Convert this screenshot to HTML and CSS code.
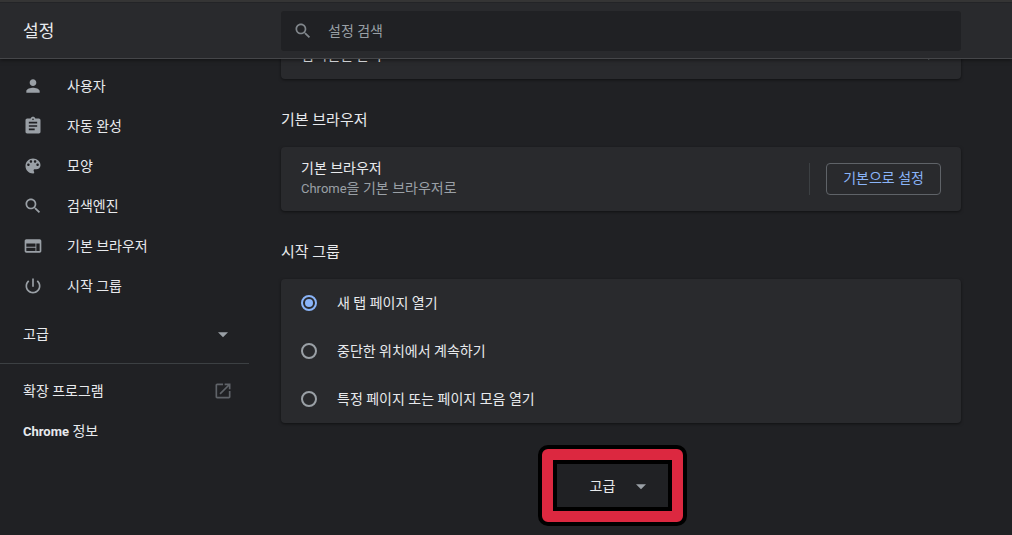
FILE: index.html
```html
<!DOCTYPE html>
<html lang="ko">
<head>
    <meta charset="UTF-8">
    <meta name="viewport" content="width=device-width, initial-scale=1.0">
    <title>설정</title>
    <link rel="stylesheet" href="styles.css">
</head>
<body>

<header class="toolbar">
    <h1>설정</h1>
    <div class="search">
        <svg class="icon" viewBox="0 0 24 24"><path d="M15.5 14h-.79l-.28-.27C15.41 12.59 16 11.11 16 9.5 16 5.91 13.09 3 9.5 3S3 5.91 3 9.5 5.91 16 9.5 16c1.61 0 3.09-.59 4.23-1.57l.27.28v.79l5 4.99L20.49 19l-4.99-5zm-6 0C7.01 14 5 11.99 5 9.5S7.01 5 9.5 5 14 7.01 14 9.5 11.99 14 9.5 14z"/></svg>
        <input type="text" id="search" placeholder="설정 검색" aria-label="설정 검색">
    </div>
</header>

<div class="container">
    <nav class="sidebar">
        <a href="#people">
            <svg class="icon" viewBox="0 0 24 24"><path d="M12 12c2.21 0 4-1.79 4-4s-1.79-4-4-4-4 1.79-4 4 1.79 4 4 4zm0 2c-2.67 0-8 1.34-8 4v2h16v-2c0-2.66-5.33-4-8-4z"/></svg>
            사용자
        </a>
        <a href="#autofill">
            <svg class="icon" viewBox="0 0 24 24"><path d="M19 3h-4.18C14.4 1.84 13.3 1 12 1c-1.3 0-2.4.84-2.82 2H5c-1.1 0-2 .9-2 2v14c0 1.1.9 2 2 2h14c1.1 0 2-.9 2-2V5c0-1.1-.9-2-2-2zm-7 0c.55 0 1 .45 1 1s-.45 1-1 1-1-.45-1-1 .45-1 1-1zm2 14H7v-2h7v2zm3-4H7v-2h10v2zm0-4H7V7h10v2z"/></svg>
            자동 완성
        </a>
        <a href="#appearance">
            <svg class="icon" viewBox="0 0 24 24"><path d="M12 3c-4.97 0-9 4.03-9 9s4.03 9 9 9c.83 0 1.5-.67 1.5-1.5 0-.39-.15-.74-.39-1.01-.23-.26-.38-.61-.38-.99 0-.83.67-1.5 1.5-1.5H16c2.76 0 5-2.24 5-5 0-4.42-4.03-8-9-8zm-5.5 9c-.83 0-1.5-.67-1.5-1.5S5.67 9 6.5 9 8 9.67 8 10.5 7.33 12 6.5 12zm3-4C8.67 8 8 7.33 8 6.5S8.67 5 9.5 5s1.5.67 1.5 1.5S10.33 8 9.5 8zm5 0c-.83 0-1.5-.67-1.5-1.5S13.67 5 14.5 5s1.5.67 1.5 1.5S15.33 8 14.5 8zm3 4c-.83 0-1.5-.67-1.5-1.5S16.67 9 17.5 9s1.5.67 1.5 1.5-.67 1.5-1.5 1.5z"/></svg>
            모양
        </a>
        <a href="#searchEngine">
            <svg class="icon" viewBox="0 0 24 24"><path d="M15.5 14h-.79l-.28-.27C15.41 12.59 16 11.11 16 9.5 16 5.91 13.09 3 9.5 3S3 5.91 3 9.5 5.91 16 9.5 16c1.61 0 3.09-.59 4.23-1.57l.27.28v.79l5 4.99L20.49 19l-4.99-5zm-6 0C7.01 14 5 11.99 5 9.5S7.01 5 9.5 5 14 7.01 14 9.5 11.99 14 9.5 14z"/></svg>
            검색엔진
        </a>
        <a href="#defaultBrowser">
            <svg class="icon" viewBox="0 0 24 24"><path d="M20 4H4c-1.1 0-1.99.9-1.99 2L2 18c0 1.1.9 2 2 2h16c1.1 0 2-.9 2-2V6c0-1.1-.9-2-2-2zm-5 14H4v-4h11v4zm0-5H4V9h11v4zm5 5h-4V9h4v9z"/></svg>
            기본 브라우저
        </a>
        <a href="#onStartup">
            <svg class="icon" viewBox="0 0 24 24"><path d="M13 3h-2v10h2V3zm4.83 2.17l-1.42 1.42C17.99 7.86 19 9.81 19 12c0 3.87-3.13 7-7 7s-7-3.13-7-7c0-2.19 1.01-4.14 2.58-5.42L6.17 5.17C4.23 6.82 3 9.26 3 12c0 4.97 4.03 9 9 9s9-4.03 9-9c0-2.74-1.23-5.18-3.17-6.83z"/></svg>
            시작 그룹
        </a>
        <button class="menu-advanced">
            고급
            <svg class="icon" viewBox="0 0 24 24"><path d="M6 10l6 6 6-6z"/></svg>
        </button>
        <hr>
        <a class="plain" href="#extensions">
            확장 프로그램
            <svg class="icon external" viewBox="0 0 24 24"><path d="M19 19H5V5h7V3H5c-1.11 0-2 .9-2 2v14c0 1.1.89 2 2 2h14c1.1 0 2-.9 2-2v-7h-2v7zM14 3v2h3.59l-9.83 9.83 1.41 1.41L19 6.41V10h2V3h-7z"/></svg>
        </a>
        <a class="plain" href="#about"><span><span class="latin">Chrome</span> 정보</span></a>
    </nav>

    <main class="content">
        <!-- last row of the search engine section, scrolled under the toolbar -->
        <section class="card scrolled">
            <a class="row link-row" href="#searchEngines">
                검색엔진 관리
                <svg class="icon" viewBox="0 0 24 24"><path d="M9 6l6 6-6 6z"/></svg>
            </a>
        </section>

        <h2 id="defaultBrowser">기본 브라우저</h2>
        <section class="card browser">
            <div class="browser-text">
                <div>기본 브라우저</div>
                <div class="secondary"><span class="latin">Chrome</span>을 기본 브라우저로</div>
            </div>
            <div class="browser-action">
                <button class="action-button">기본으로 설정</button>
            </div>
        </section>

        <h2 id="onStartup">시작 그룹</h2>
        <section class="card">
            <label class="row"><input type="radio" name="startup" checked>새 탭 페이지 열기</label>
            <label class="row"><input type="radio" name="startup">중단한 위치에서 계속하기</label>
            <label class="row"><input type="radio" name="startup">특정 페이지 또는 페이지 모음 열기</label>
        </section>

        <div class="advanced">
            <div class="highlight">
                <button>
                    고급
                    <svg class="icon" viewBox="0 0 24 24"><path d="M6 10l6 6 6-6z"/></svg>
                </button>
            </div>
        </div>
    </main>
</div>

</body>
</html>
```
FILE: styles.css
```css
* {
    box-sizing: border-box;
}

body {
    margin: 0;
    background-color: #202124;
    color: #e8eaed;
    font-family: Roboto, "Noto Sans CJK KR", sans-serif;
    font-size: 14px;
    line-height: 20px;
}

a {
    color: inherit;
    text-decoration: none;
}

button, input {
    font: inherit;
    color: inherit;
}

button {
    background: none;
    border: none;
    cursor: pointer;
}

.icon {
    flex: none;
    width: 20px;
    height: 20px;
    fill: #9aa0a6;
}

/* Latin letters look larger than the Korean ones at the same size */
.latin {
    font-size: 13px;
}

/* Toolbar and page share the same columns */
.toolbar, .container {
    display: grid;
    grid-template-columns: 281px minmax(0, 680px);
    padding-right: 16px;
}

.toolbar {
    position: sticky;
    top: 0;
    z-index: 1;
    align-items: center;
    height: 59px;
    padding-top: 2px;
    background-color: #292a2d;
    border-top: 2px solid #353535;
    border-bottom: 1px solid #454649;
    box-shadow: 0 1px 4px rgba(0, 0, 0, 0.5), inset 0 1px #232427;
}

.toolbar h1 {
    margin: 0;
    padding-left: 23px;
    font-size: 17px;
    font-weight: 400;
}

.search {
    display: flex;
    align-items: center;
    gap: 15px;
    height: 40px;
    padding: 0 12px;
    background-color: #202124;
    border-radius: 3px;
}

.search .icon {
    fill: #80868b;
}

.search input {
    flex: 1;
    min-width: 0;
    padding: 0;
    background: none;
    border: none;
    outline: none;
}

.search input::placeholder {
    color: #9aa0a6;
    opacity: 1;
}

/* Sidebar */
.sidebar {
    width: 249px;
    padding-top: 7px;
}

.sidebar a, .menu-advanced {
    display: flex;
    align-items: center;
    gap: 24px;
    width: 100%;
    height: 40px;
    padding: 0 16px 0 23px;
}

.sidebar .menu-advanced, .sidebar .plain {
    justify-content: space-between;
}

.sidebar .latin {
    font-weight: 700;
}

.menu-advanced {
    margin-top: 8px;
}

.sidebar hr {
    margin: 9px 0 7px;
    border: none;
    border-top: 1px solid #3c4043;
}

.sidebar .external {
    fill: #5f6368;
}

/* Cards */
h2 {
    margin: 0;
    padding: 31px 0 17px;
    font-size: 15px;
    font-weight: 400;
}

.card {
    background-color: #292a2d;
    border-radius: 4px;
    box-shadow: 0 1px 3px rgba(0, 0, 0, 0.5);
}

.scrolled {
    margin-top: -28px;
}

.row {
    display: flex;
    align-items: center;
    gap: 20px;
    height: 48px;
    padding: 0 20px;
}

.link-row {
    justify-content: space-between;
}

.browser {
    display: flex;
    justify-content: space-between;
    padding: 16px 20px;
    min-height: 64px;
}

.browser-text {
    margin: -5px 0;
}

.secondary {
    color: #9aa0a6;
}

.browser-action {
    padding-left: 16px;
    border-left: 1px solid #3c4043;
}

.action-button {
    height: 32px;
    padding: 0 16px 2px;
    border: 1px solid #5f6368;
    border-radius: 4px;
    color: #8ab4f8;
}

input[type="radio"] {
    appearance: none;
    flex: none;
    display: grid;
    place-items: center;
    width: 16px;
    height: 16px;
    margin: 0;
    border: 2px solid #9aa0a6;
    border-radius: 50%;
}

input[type="radio"]:checked {
    border-color: #8ab4f8;
}

input[type="radio"]:checked::before {
    content: "";
    width: 8px;
    height: 8px;
    border-radius: 50%;
    background-color: #8ab4f8;
}

/* Highlighted advanced button */
.advanced {
    display: flex;
    justify-content: center;
    padding: 22px 17px 0 0;
}

.highlight {
    padding: 11px;
    background-color: #dc2840;
    border: 4px solid #000;
    border-radius: 10px;
}

.highlight button {
    display: flex;
    align-items: center;
    gap: 16px;
    height: 51px;
    padding: 0 17px 0 33px;
    background-color: #202124;
    border: 4px solid #000;
}
```
